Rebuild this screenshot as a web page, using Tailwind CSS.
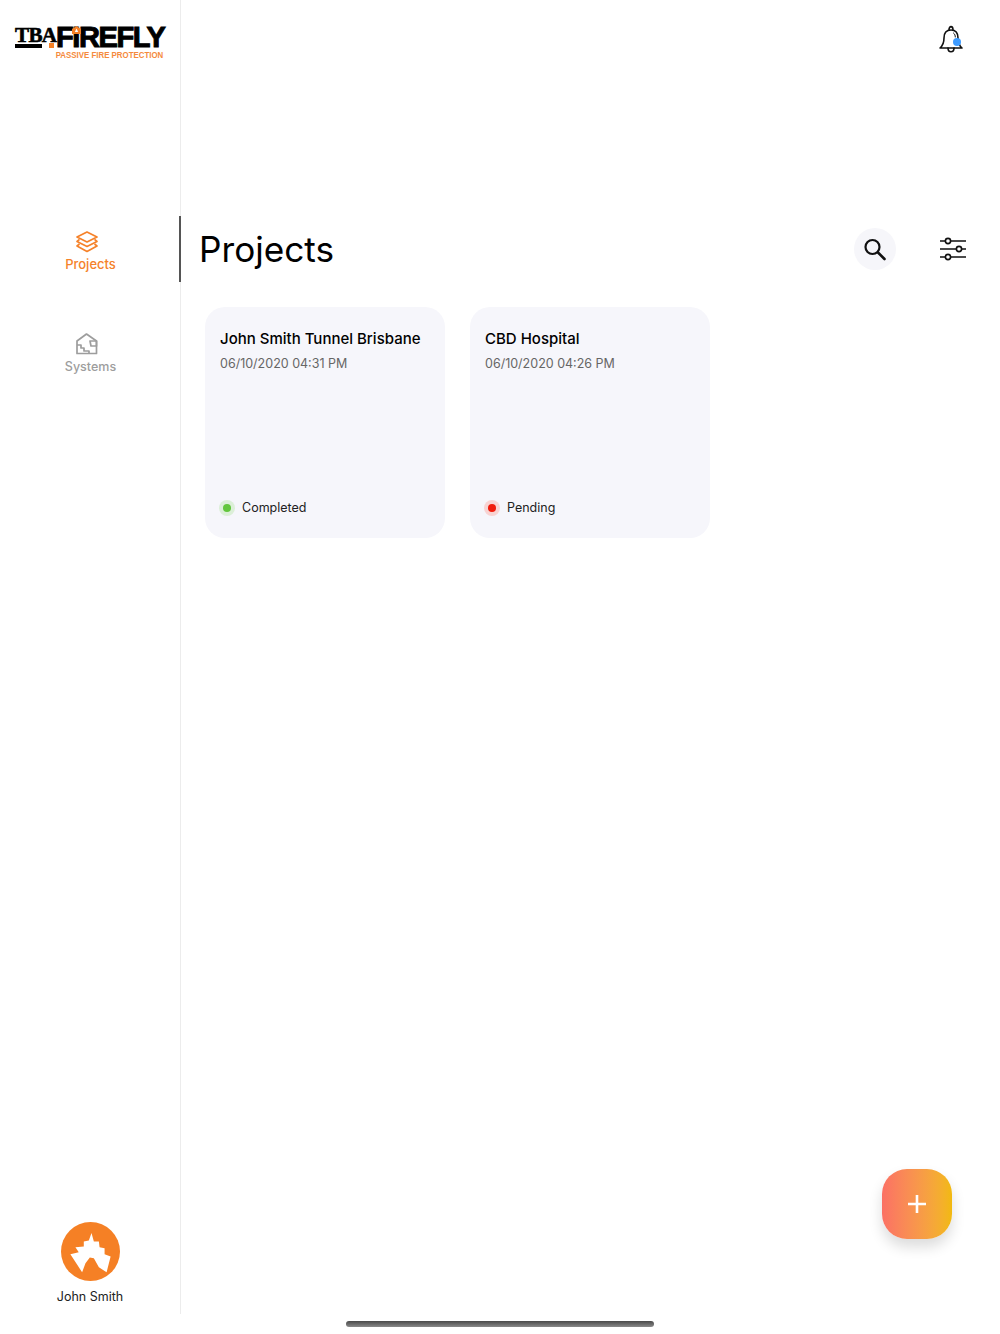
<!DOCTYPE html>
<html lang="en">
<head>
  <meta charset="UTF-8" />
  <title>Projects</title>
  <script src="https://cdn.jsdelivr.net/npm/@tailwindcss/browser@4"></script>
</head>
<body class="bg-white font-['Inter',sans-serif] text-black">
  <div class="relative flex h-[1334px] w-[1000px] overflow-hidden">

    <!-- sidebar -->
    <aside class="flex h-[1314px] w-[181px] shrink-0 flex-col border-r border-[#ececec]">
      <div class="h-[216px] pl-[15px] pt-[26px]">
        <div class="relative h-[33px] w-[152px]">
          <div class="flex h-[23px] items-start leading-none">
            <span class="mt-[-1px] w-[41px] font-['Liberation_Serif',serif] text-[21px] leading-[20px] font-bold tracking-[-0.6px] [-webkit-text-stroke:0.6px_black]">TBA</span>
            <span class="font-['Liberation_Sans',sans-serif] text-[29px] leading-[23px] font-bold tracking-[-1.4px] [-webkit-text-stroke:1px_black]">FIREFLY</span>
          </div>
          <div class="absolute top-[18px] left-0 h-[4px] w-[27px] bg-black"></div>
          <div class="absolute top-[17px] left-[34px] h-[5px] w-[5px] bg-[#f58025]"></div>
          <svg class="absolute top-0 left-[57px]" width="9" height="8" viewBox="0 0 9 8">
            <path fill="#f58025" d="M4.5 0 L9 3 V8 H0 V3 Z" />
            <path fill="#fff" d="M4.5 2.5 L6.2 6 H2.8 Z" />
          </svg>
          <div class="origin-left scale-x-[0.83] pl-[49px] font-['Liberation_Sans',sans-serif] text-[9.5px] leading-[11px] font-bold whitespace-nowrap text-[#f58a3c]">PASSIVE FIRE PROTECTION</div>
        </div>
      </div>

      <nav class="flex flex-col">
        <a class="relative flex h-[66px] flex-col items-center pt-[15px]">
          <svg class="mr-[6px]" width="24" height="22" viewBox="0 0 24 22" fill="none" stroke="#f5822a" stroke-width="1.7" stroke-linejoin="round">
            <path d="M12 1 L22 6 L12 11 L2 6 Z" />
            <path d="M4.5 8.4 L2 10.5 L12 15.5 L22 10.5 L19.5 8.4" />
            <path d="M4.5 13 L2 15 L12 20.5 L22 15 L19.5 13" />
          </svg>
          <span class="mt-[3px] ml-[1px] text-[13px] leading-[16px] font-medium text-[#f5822a]">Projects</span>
          <span class="absolute top-0 right-[-0.5px] h-[66px] w-[1.5px] bg-[#555]"></span>
        </a>
        <a class="mt-[51px] flex h-[66px] flex-col items-center">
          <svg class="mr-[6px]" width="22" height="22" viewBox="0 0 22 22" fill="none" stroke="#9d9d9d" stroke-width="1.7" stroke-linejoin="round">
            <path d="M1 20.5 V8 L10.5 1 L20.5 8 V20.5 Z" />
            <path d="M1 12 H5 V15 H8 V18 H13 V20.5" />
            <path d="M14 8 H20.5 V13 H15 Z" />
          </svg>
          <span class="mt-[4px] ml-[1px] text-[12.5px] leading-[16px] font-medium text-[#9d9d9d]">Systems</span>
        </a>
      </nav>

      <div class="mt-auto flex flex-col items-center pb-[9px]">
        <svg width="59" height="59" viewBox="0 0 176 176">
          <circle cx="88" cy="88" r="88" fill="#f58025" />
          <path fill="#fff" d="M91 33 L98 58 L113 58 L115 75 L130 78 L130 96 L148 103 L136 150 L113 135 L98 108 L86 106 L73 123 L63 150 L28 96 L53 90 L43 75 L68 73 L68 58 L83 55 Z" />
        </svg>
        <span class="mt-[8px] text-[12.5px] leading-[16px] text-[#222]">John Smith</span>
      </div>
    </aside>

    <!-- main -->
    <main class="flex-1">
      <div class="flex h-[216px] items-start justify-end pt-[24px] pr-[37px]">
        <div class="relative h-[30px] w-[24px]">
          <svg width="24" height="30" viewBox="0 0 24 30" fill="none" stroke="#111" stroke-width="1.6" stroke-linecap="round" stroke-linejoin="round">
            <path d="M1 24 C4.5 21 5 18 5 14 C5 9 7.5 6 12 6 C16.5 6 19 9 19 14 C19 18 19.5 21 23 24 Z" />
            <path d="M10 6 C10 1.5 14 1.5 14 6" />
            <path d="M9 24 C9 29 15 29 15 24" />
            <path d="M14.5 9 C15.8 10 16.3 11.5 16.3 13" stroke-width="1" />
          </svg>
          <span class="absolute top-[14px] left-[14px] h-[7.5px] w-[7.5px] rounded-full bg-[#3d9bff]"></span>
        </div>
      </div>

      <div class="flex h-[66px] items-center pl-[18px] pr-[34px]">
        <h1 class="pt-[1px] text-[35.2px] leading-none font-normal">Projects</h1>
        <button class="mr-[44px] ml-auto flex h-[42px] w-[42px] items-center justify-center rounded-full bg-[#f6f6fa]">
          <svg width="24" height="24" viewBox="0.5 0 24 24" fill="none" stroke="#111" stroke-width="2.2" stroke-linecap="round">
            <circle cx="10" cy="10" r="7" />
            <path d="M15.5 15.5 L22 22" stroke-width="2.6" />
          </svg>
        </button>
        <svg width="26" height="24" viewBox="0 0 26 24" fill="none" stroke="#111" stroke-width="1.6">
          <path d="M0 4 H5.5 M10.5 4 H26" />
          <circle cx="8" cy="4" r="2.6" />
          <path d="M0 12 H16.5 M21.5 12 H26" />
          <circle cx="19" cy="12" r="2.6" />
          <path d="M0 20 H5.5 M10.5 20 H26" />
          <circle cx="8" cy="20" r="2.6" />
        </svg>
      </div>

      <div class="mt-[25px] flex gap-[25px] pl-[24px]">
        <div class="flex h-[231px] w-[240px] flex-col rounded-[20px] bg-[#f6f6fb] px-[15px] pt-[22px] pb-[21px]">
          <h2 class="text-[15px] leading-[20px] font-medium whitespace-nowrap">John Smith Tunnel Brisbane</h2>
          <p class="mt-[6px] text-[12.5px] leading-[18px] text-[#666]">06/10/2020 04:31 PM</p>
          <div class="mt-auto flex items-center gap-[7px]">
            <span class="ml-[-1px] flex h-[16px] w-[16px] items-center justify-center rounded-full bg-[#dcefd8]"><span class="h-[8px] w-[8px] rounded-full bg-[#62c63c]"></span></span>
            <span class="pt-[1px] text-[12.5px] leading-[18px] text-[#222]">Completed</span>
          </div>
        </div>
        <div class="flex h-[231px] w-[240px] flex-col rounded-[20px] bg-[#f6f6fb] px-[15px] pt-[22px] pb-[21px]">
          <h2 class="text-[15px] leading-[20px] font-medium whitespace-nowrap">CBD Hospital</h2>
          <p class="mt-[6px] text-[12.5px] leading-[18px] text-[#666]">06/10/2020 04:26 PM</p>
          <div class="mt-auto flex items-center gap-[7px]">
            <span class="ml-[-1px] flex h-[16px] w-[16px] items-center justify-center rounded-full bg-[#f8d3d2]"><span class="h-[8px] w-[8px] rounded-full bg-[#f01c0c]"></span></span>
            <span class="pt-[1px] text-[12.5px] leading-[18px] text-[#222]">Pending</span>
          </div>
        </div>
      </div>
    </main>

    <!-- add button -->
    <button class="absolute top-[1169px] left-[882px] flex h-[70px] w-[70px] items-center justify-center rounded-[25px] bg-gradient-to-r from-[#fb7064] to-[#f2b90d] shadow-[0_8px_14px_rgba(0,0,0,0.14)]">
      <svg width="18" height="18" viewBox="0 0 18 18" stroke="#fff" stroke-width="2.6">
        <path d="M9 0 V18 M0 9 H18" />
      </svg>
    </button>

    <!-- home indicator -->
    <div class="absolute top-[1321px] left-[346px] h-[6px] w-[308px] rounded-full bg-gradient-to-b from-[#4a4a4a] to-[#8a8a8a]"></div>
  </div>
</body>
</html>
